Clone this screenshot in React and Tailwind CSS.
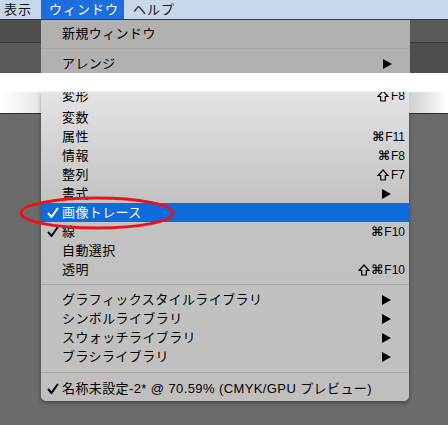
import React from 'react';

const font = { fontFamily: '"Liberation Sans", "Noto Sans CJK JP", sans-serif' };
const sym = { fontFamily: '"DejaVu Sans", sans-serif' };

function Arrow() {
  return (
    <svg width="9" height="10" viewBox="0 0 9 10" className="mr-[14px]">
      <polygon points="0,0 9,5 0,10" fill="#000" />
    </svg>
  );
}

function ShiftIcon() {
  return (
    <svg width="12" height="12" viewBox="0 0 12 12" className="mr-[1px]">
      <path d="M6 1 L11 6.5 H8.3 V11 H3.7 V6.5 H1 Z" fill="none" stroke="#000" strokeWidth="1.2" strokeLinejoin="miter" />
    </svg>
  );
}

function Check({ color }) {
  return (
    <svg width="12" height="12" viewBox="0 0 12 12">
      <path d="M1.5 6.5 L4.5 10 L10.5 1.5" fill="none" stroke={color} strokeWidth="2" strokeLinecap="round" strokeLinejoin="round" />
    </svg>
  );
}

function Shortcut({ shift, cmd, fkey }) {
  return (
    <span className="flex items-center whitespace-nowrap">
      {shift && <ShiftIcon />}
      {cmd && <span className="text-[13px] font-bold leading-none" style={sym}>⌘</span>}
      <span className="text-[12px] ml-[1px]">{fkey}</span>
    </span>
  );
}

function Row({ label, shortcut, sub, checked, active, className = '' }) {
  return (
    <div
      className={`flex items-center h-[19px] pl-[6px] pr-[4px] text-[13px] ${
        active ? 'bg-[#0d6bdc] text-white' : 'text-black'
      } ${className}`}
    >
      <span className="w-[15px] flex items-center">{checked && <Check color={active ? '#fff' : '#000'} />}</span>
      <span className="flex-1 tracking-[0.4px] whitespace-nowrap">{label}</span>
      {shortcut && <Shortcut {...shortcut} />}
      {sub && <Arrow />}
    </div>
  );
}

function Sep({ h = 'h-[12px]' }) {
  return (
    <div className={`${h} flex items-center`}>
      <div className="w-full h-[2px] border-t border-[#a9a8a7] border-b-[#cfcfcf]" />
    </div>
  );
}

export default function App() {
  return (
    <div className="w-[448px] h-[425px] overflow-hidden relative bg-[#6b6b6b]" style={font}>
      {/* menu bar */}
      <div className="flex h-[20px] bg-[#c7d7ec] border-b border-[#3a3a3a] text-[13px] text-[#111]">
        <div className="px-[4px] leading-[19px] tracking-[1px]">表示</div>
        <div className="ml-[5px] w-[83px] pl-[8px] bg-[#1b6ee0] text-white leading-[19px] tracking-[1px]">ウィンドウ</div>
        <div className="ml-[9px] leading-[19px] tracking-[1px]">ヘルプ</div>
      </div>

      {/* upper part of the menu */}
      <div className="flex h-[53px]">
        <div className="w-[41px] flex flex-col">
          <div className="h-[22px] bg-[#4f4f4f]" />
          <div className="h-[1px] bg-[#3a3a3a]" />
          <div className="flex-1 bg-[#5a5a5a]" />
        </div>
        <div className="w-[369px] bg-[#b3b1b0] pt-[4px]">
          <Row label="新規ウィンドウ" className="h-[20px]" />
          <Sep h="h-[10px]" />
          <Row label="アレンジ" sub className="h-[20px]" />
        </div>
        <div className="flex-1 flex flex-col">
          <div className="h-[22px] bg-[#595959]" />
          <div className="h-[1px] bg-[#3a3a3a]" />
          <div className="flex-1 bg-[#4f4f4f]" />
        </div>
      </div>

      {/* white band */}
      <div className="h-[19px] bg-white" />

      {/* lower part of the menu */}
      <div className="flex">
        <div className="w-[41px] flex flex-col">
          <div className="h-[21px] bg-gradient-to-r from-white to-[#e6e6e6]" />
          <div className="h-[1px] bg-[#2e2e2e]" />
        </div>
        <div className="w-[368px] flex flex-col">
          <div className="bg-gradient-to-b from-[#e4e4e4] via-[#c3c3c3] via-35% to-[#c0bfbe] rounded-b-[5px] shadow-[0_2px_4px_rgba(0,0,0,0.35)] pb-[3px]">
            {/* first row is cut by the screenshot edge */}
            <div className="h-[16px] overflow-hidden flex flex-col justify-end">
              <Row label="変形" shortcut={{ shift: true, fkey: 'F8' }} className="shrink-0 mb-[3px]" />
            </div>
            <Row label="変数" />
            <Row label="属性" shortcut={{ cmd: true, fkey: 'F11' }} />
            <Row label="情報" shortcut={{ cmd: true, fkey: 'F8' }} />
            <Row label="整列" shortcut={{ shift: true, fkey: 'F7' }} />
            <Row label="書式" sub />
            <Row label="画像トレース" checked active />
            <Row label="線" checked shortcut={{ cmd: true, fkey: 'F10' }} />
            <Row label="自動選択" />
            <Row label="透明" shortcut={{ shift: true, cmd: true, fkey: 'F10' }} />
            <Sep h="h-[11px]" />
            <Row label="グラフィックスタイルライブラリ" sub />
            <Row label="シンボルライブラリ" sub />
            <Row label="スウォッチライブラリ" sub />
            <Row label="ブラシライブラリ" sub />
            <Sep h="h-[13px]" />
            <Row label="名称未設定-2* @ 70.59% (CMYK/GPU プレビュー)" checked />
          </div>
        </div>
        <div className="flex-1 flex flex-col">
          <div className="h-[21px] bg-gradient-to-r from-[#cfcfcf] to-white" />
          <div className="h-[1px] bg-[#2e2e2e]" />
        </div>
      </div>

      {/* red annotation ellipse */}
      <svg className="absolute left-0 top-0 pointer-events-none" width="448" height="425">
        <ellipse cx="97" cy="213" rx="76" ry="15" fill="none" stroke="#e8141c" strokeWidth="3" />
      </svg>
    </div>
  );
}
